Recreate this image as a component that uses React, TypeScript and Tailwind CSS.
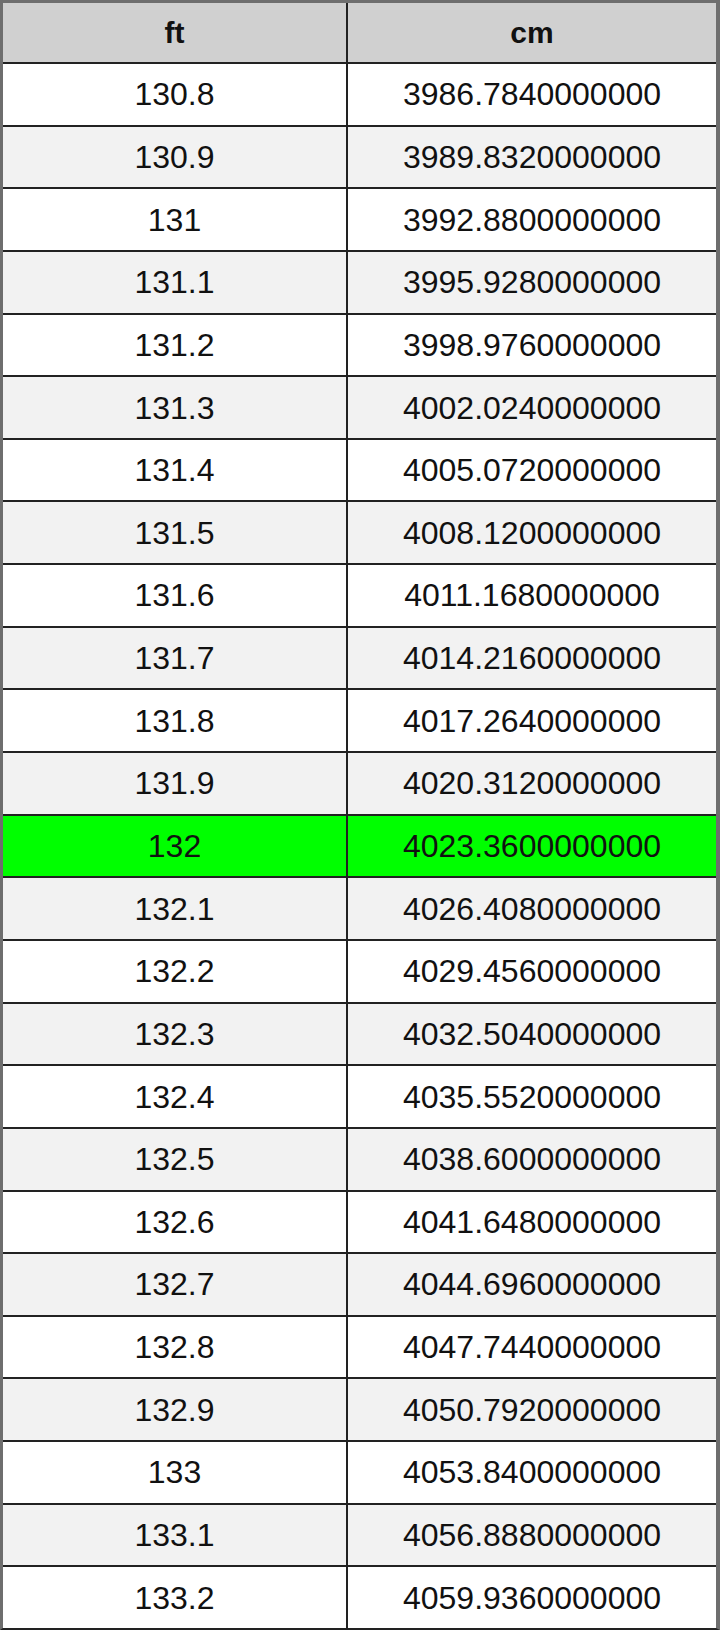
const rows: [string, string][] = [
  ["130.8", "3986.7840000000"],
  ["130.9", "3989.8320000000"],
  ["131", "3992.8800000000"],
  ["131.1", "3995.9280000000"],
  ["131.2", "3998.9760000000"],
  ["131.3", "4002.0240000000"],
  ["131.4", "4005.0720000000"],
  ["131.5", "4008.1200000000"],
  ["131.6", "4011.1680000000"],
  ["131.7", "4014.2160000000"],
  ["131.8", "4017.2640000000"],
  ["131.9", "4020.3120000000"],
  ["132", "4023.3600000000"],
  ["132.1", "4026.4080000000"],
  ["132.2", "4029.4560000000"],
  ["132.3", "4032.5040000000"],
  ["132.4", "4035.5520000000"],
  ["132.5", "4038.6000000000"],
  ["132.6", "4041.6480000000"],
  ["132.7", "4044.6960000000"],
  ["132.8", "4047.7440000000"],
  ["132.9", "4050.7920000000"],
  ["133", "4053.8400000000"],
  ["133.1", "4056.8880000000"],
  ["133.2", "4059.9360000000"],
];

export default function App() {
  return (
    <div className="w-[720px] h-[1636px] bg-white font-['Liberation_Sans',Arial,sans-serif] text-[#111]">
      <div className="border-t-[3px] border-l-[3px] border-r-[4px] border-[#6e6e6e] border-b-2 border-b-[#222]">
        <div className="grid h-[1625px] grid-cols-[343px_1fr] grid-rows-[59px_repeat(25,minmax(0,1fr))] gap-[2px] bg-[#222]">
          <div className="flex items-center justify-center bg-[#d0d0d0] text-[30px] font-bold">ft</div>
          <div className="flex items-center justify-center bg-[#d0d0d0] text-[30px] font-bold">cm</div>
          {rows.map(([ft, cm], i) => {
            const bg = ft === "132" ? "bg-[#00ff00]" : i % 2 === 1 ? "bg-[#f2f2f2]" : "bg-white";
            return [
              <div key={ft + "a"} className={`flex items-center justify-center text-[32px] ${bg}`}>{ft}</div>,
              <div key={ft + "b"} className={`flex items-center justify-center text-[32px] ${bg}`}>{cm}</div>,
            ];
          })}
        </div>
      </div>
    </div>
  );
}
